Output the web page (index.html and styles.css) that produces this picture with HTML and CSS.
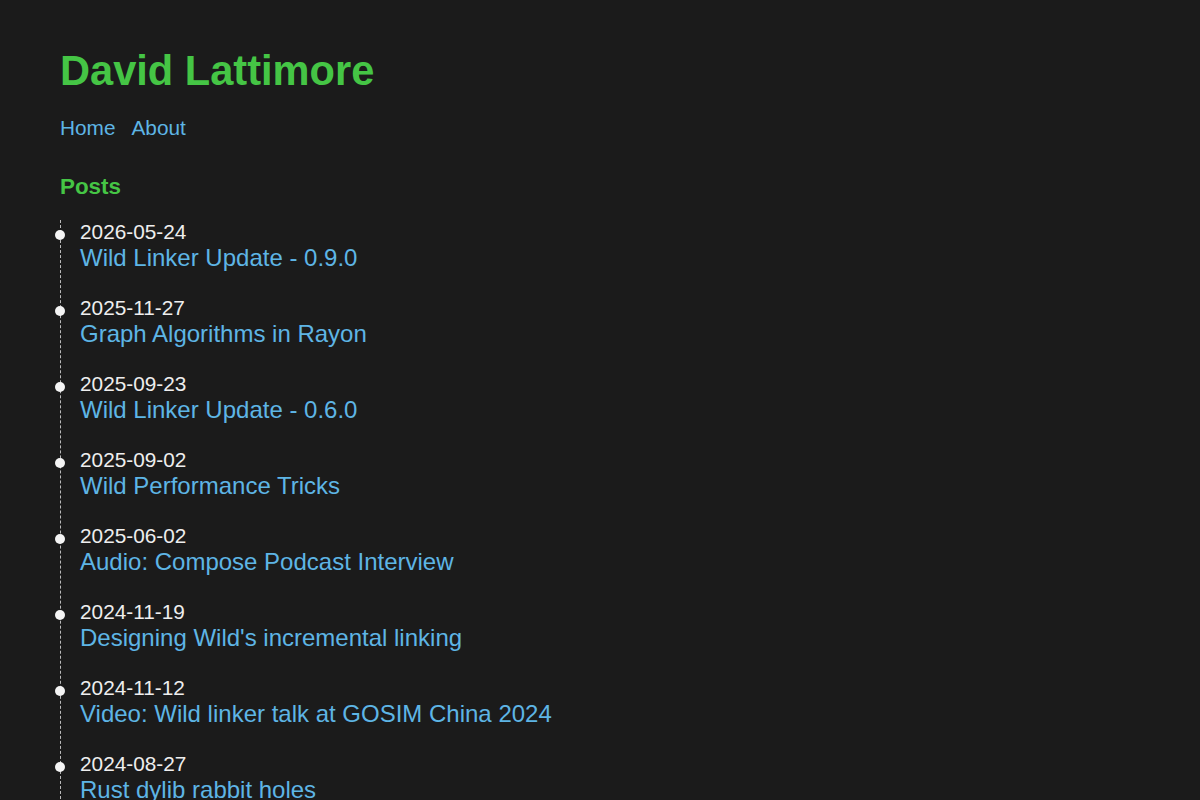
FILE: index.html
```html
<!DOCTYPE html>
<html>
<head>
<meta charset="utf-8">
<title>David Lattimore</title>
<link rel="stylesheet" href="styles.css">
</head>
<body>
<div class="page">
  <h1 class="site-title">David Lattimore</h1>
  <nav class="nav">
    <a href="#">Home</a>
    <a href="#">About</a>
  </nav>
  <h2 class="section-title">Posts</h2>
  <ul class="timeline">
    <li class="post"><div class="date">2026-05-24</div><a class="post-link" href="#">Wild Linker Update - 0.9.0</a></li>
    <li class="post"><div class="date">2025-11-27</div><a class="post-link" href="#">Graph Algorithms in Rayon</a></li>
    <li class="post"><div class="date">2025-09-23</div><a class="post-link" href="#">Wild Linker Update - 0.6.0</a></li>
    <li class="post"><div class="date">2025-09-02</div><a class="post-link" href="#">Wild Performance Tricks</a></li>
    <li class="post"><div class="date">2025-06-02</div><a class="post-link" href="#">Audio: Compose Podcast Interview</a></li>
    <li class="post"><div class="date">2024-11-19</div><a class="post-link" href="#">Designing Wild's incremental linking</a></li>
    <li class="post"><div class="date">2024-11-12</div><a class="post-link" href="#">Video: Wild linker talk at GOSIM China 2024</a></li>
    <li class="post"><div class="date">2024-08-27</div><a class="post-link" href="#">Rust dylib rabbit holes</a></li>
  </ul>
</div>
</body>
</html>
```

FILE: styles.css
```css
html, body {
  margin: 0;
  padding: 0;
  background: #1b1b1b;
}
body {
  font-family: "Liberation Sans", Arial, sans-serif;
  color: #eeeeee;
  font-size: 16px;
}
.page {
  padding: 0 60px;
}
.site-title {
  margin: 47px 0 0 0;
  font-size: 41.6px;
  font-weight: bold;
  line-height: 47px;
  color: #45c545;
}
.nav {
  margin-top: 22px;
  display: flex;
  gap: 16px;
  font-size: 20.8px;
  line-height: 24px;
}
.nav a {
  color: #5eb5e5;
  text-decoration: none;
}
.section-title {
  margin: 34px 0 0 0;
  font-size: 22.4px;
  line-height: 25px;
  font-weight: bold;
  color: #45c545;
}
.timeline {
  list-style: none;
  margin: 21px 0 0 0;
  padding: 0 0 0 19px;
  border-left: 1px dashed #bbbbbb;
}
.post {
  position: relative;
  margin-bottom: 24px;
}
.post::before {
  content: "";
  position: absolute;
  left: -25px;
  top: 10px;
  width: 10px;
  height: 10px;
  border-radius: 50%;
  background: #f4f4f4;
}
.date {
  font-size: 20.8px;
  line-height: 24px;
  color: #eeeeee;
}
.post-link {
  display: block;
  font-size: 24px;
  line-height: 28px;
  color: #5eb5e5;
  text-decoration: none;
}
```
